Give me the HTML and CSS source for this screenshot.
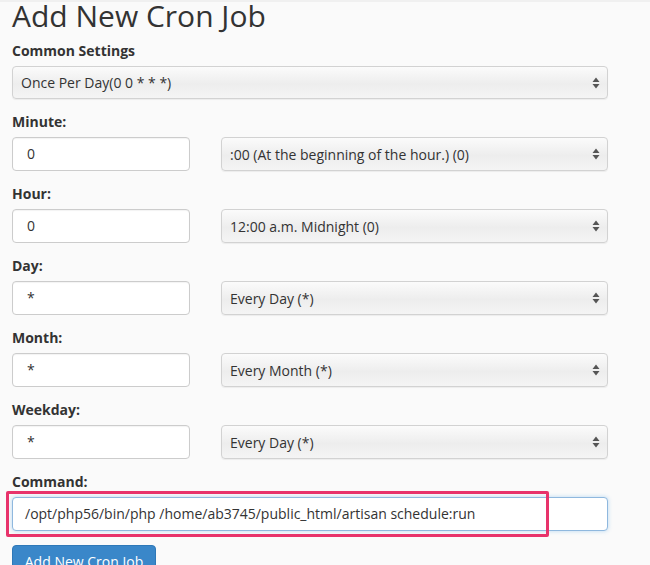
FILE: index.html
```html
<!DOCTYPE html>
<html>
<head>
<meta charset="utf-8">
<link rel="stylesheet" href="styles.css">
</head>
<body>
<div class="page">
  <h1 class="title">Add New Cron Job</h1>

  <div class="group">
    <div class="label">Common Settings</div>
    <div class="select select-full"><span>Once Per Day(0 0 * * *)</span><svg class="arrows" width="8" height="12" viewBox="0 0 8 12"><path d="M4 0.5 L7.5 5 L0.5 5 Z M4 11.5 L7.5 7 L0.5 7 Z" fill="#555"/></svg></div>
  </div>

  <div class="group">
    <div class="label">Minute:</div>
    <div class="row">
      <div class="input">0</div>
      <div class="select"><span>:00 (At the beginning of the hour.) (0)</span><svg class="arrows" width="8" height="12" viewBox="0 0 8 12"><path d="M4 0.5 L7.5 5 L0.5 5 Z M4 11.5 L7.5 7 L0.5 7 Z" fill="#555"/></svg></div>
    </div>
  </div>

  <div class="group">
    <div class="label">Hour:</div>
    <div class="row">
      <div class="input">0</div>
      <div class="select"><span>12:00 a.m. Midnight (0)</span><svg class="arrows" width="8" height="12" viewBox="0 0 8 12"><path d="M4 0.5 L7.5 5 L0.5 5 Z M4 11.5 L7.5 7 L0.5 7 Z" fill="#555"/></svg></div>
    </div>
  </div>

  <div class="group">
    <div class="label">Day:</div>
    <div class="row">
      <div class="input">*</div>
      <div class="select"><span>Every Day (*)</span><svg class="arrows" width="8" height="12" viewBox="0 0 8 12"><path d="M4 0.5 L7.5 5 L0.5 5 Z M4 11.5 L7.5 7 L0.5 7 Z" fill="#555"/></svg></div>
    </div>
  </div>

  <div class="group">
    <div class="label">Month:</div>
    <div class="row">
      <div class="input">*</div>
      <div class="select"><span>Every Month (*)</span><svg class="arrows" width="8" height="12" viewBox="0 0 8 12"><path d="M4 0.5 L7.5 5 L0.5 5 Z M4 11.5 L7.5 7 L0.5 7 Z" fill="#555"/></svg></div>
    </div>
  </div>

  <div class="group">
    <div class="label">Weekday:</div>
    <div class="row">
      <div class="input">*</div>
      <div class="select"><span>Every Day (*)</span><svg class="arrows" width="8" height="12" viewBox="0 0 8 12"><path d="M4 0.5 L7.5 5 L0.5 5 Z M4 11.5 L7.5 7 L0.5 7 Z" fill="#555"/></svg></div>
    </div>
  </div>

  <div class="group">
    <div class="label">Command:</div>
    <div class="command-wrap">
      <div class="input input-command">/opt/php56/bin/php /home/ab3745/public_html/artisan schedule:run</div>
      <div class="highlight"></div>
    </div>
  </div>

  <div class="button">Add New Cron Job</div>
</div>
</body>
</html>
```

FILE: styles.css
```css
html, body {
  margin: 0;
  padding: 0;
  background: #fafafa;
}
body {
  font-family: "Open Sans", "Liberation Sans", sans-serif;
  color: #333;
  border-top: 2px solid #f0f0f0;
}
.page {
  width: 596px;
  padding-left: 12px;
}
.title {
  margin: -2px 0 0 0;
  font-size: 30px;
  line-height: 32px;
  font-weight: 400;
  color: #333;
  height: 41px;
}
.group {
  margin-bottom: 13px;
}
.label {
  font-size: 14px;
  font-weight: 700;
  line-height: 20px;
  color: #333;
  margin-bottom: 5px;
}
.row {
  display: flex;
  gap: 31px;
}
.input {
  box-sizing: border-box;
  height: 34px;
  width: 178px;
  border: 1px solid #ccc;
  border-radius: 4px;
  background: #fff;
  font-size: 14px;
  line-height: 32px;
  padding: 0 14px;
  color: #333;
  box-shadow: inset 0 1px 1px rgba(0,0,0,0.05);
}
.select {
  box-sizing: border-box;
  flex: 1;
  height: 34px;
  border: 1px solid #d2d2d2;
  border-radius: 4px;
  background: linear-gradient(#fbfbfb, #ededed 55%, #f4f4f4);
  display: flex;
  align-items: center;
  justify-content: space-between;
  padding: 0 7px 0 8px;
  font-size: 14px;
  color: #333;
  box-shadow: 0 1px 1px rgba(0,0,0,0.06);
}
.select-full {
  height: 33px;
}
.arrows {
  display: block;
}
.command-wrap {
  position: relative;
}
.input-command {
  width: 596px;
  padding-left: 12px;
  border-color: #8fb8de;
  box-shadow: 0 0 4px rgba(102,175,233,0.45);
}
.highlight {
  position: absolute;
  left: -6px;
  top: -6px;
  width: 543px;
  height: 46px;
  box-sizing: border-box;
  border: 3px solid #e8336b;
  border-radius: 2px;
}
.button {
  display: inline-block;
  margin-top: 1px;
  height: 34px;
  box-sizing: border-box;
  width: 144px;
  text-align: center;
  background: #3a87c9;
  border: 1px solid #2e78b8;
  border-radius: 4px;
  color: #fff;
  font-size: 14px;
  line-height: 32px;
}
```
